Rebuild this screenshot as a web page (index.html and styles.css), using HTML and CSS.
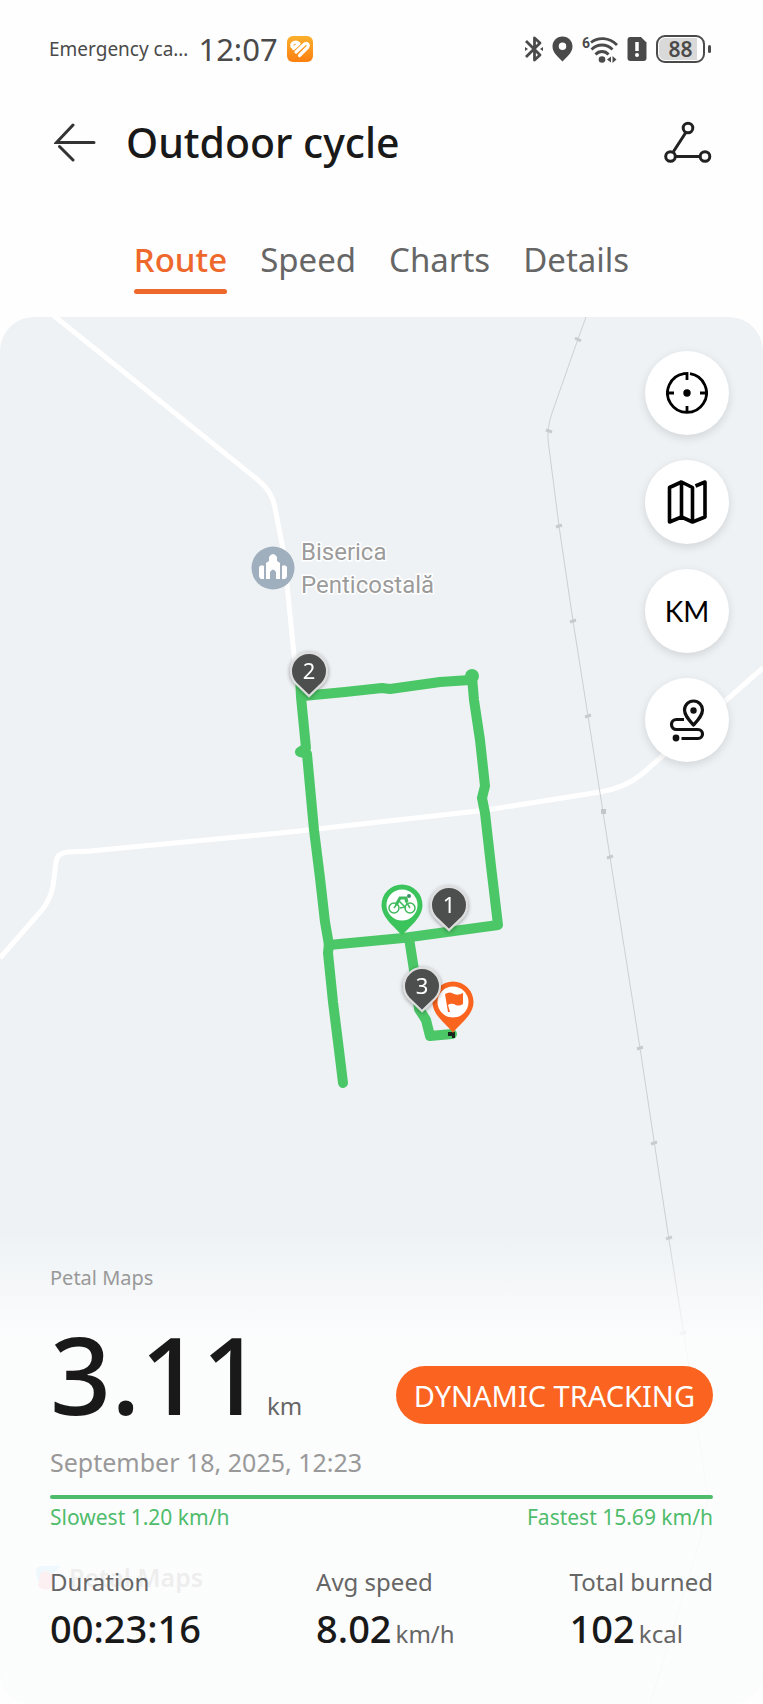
FILE: index.html
```html
<!DOCTYPE html>
<html lang="en">

<head>
    <meta charset="UTF-8">
    <meta name="viewport" content="width=device-width, initial-scale=1.0">
    <title>Outdoor cycle</title>
    <link rel="stylesheet" href="styles.css">
</head>

<body>
    <!-- status bar -->
    <div class="status-bar">
        <span class="carrier">Emergency ca…</span>
        <span class="clock">12:07</span>
        <svg class="app-badge" width="26" height="26" viewBox="0 0 26 26">
            <defs>
                <linearGradient id="badge" x1="0" y1="0" x2="0" y2="1">
                    <stop offset="0" stop-color="#fbb02c" />
                    <stop offset="1" stop-color="#fb7f10" />
                </linearGradient>
            </defs>
            <rect width="26" height="26" rx="6" fill="url(#badge)" />
            <g fill="none" stroke="#fff" stroke-width="3.200" stroke-linecap="round" stroke-linejoin="round">
                <path d="M5 10.500C4 6.500 9 5 12 7.500L6.500 12.500" />
                <path d="M9 16L17 8.500C19.500 6 23 8.500 20.500 11.500L12.500 19.500" />
            </g>
        </svg>

        <div class="status-icons">
            <svg width="18" height="26" viewBox="0 0 18 26" fill="none" stroke="#4a4a4a" stroke-width="2.800" stroke-linejoin="round">
                <path d="M1 5L15 19L9.500 24V2L15 7L1 21" />
                <path d="M0 11L3 13L0 15ZM18 11L15 13L18 15Z" fill="#4a4a4a" stroke="none" />
            </svg>
            <svg width="21" height="26" viewBox="0 0 21 26">
                <path d="M10.500 0.500C4.500 0.500 0.500 5 0.500 10.500C0.500 16.500 6 21 10.500 25.500C15 21 20.500 16.500 20.500 10.500C20.500 5 16.500 0.500 10.500 0.500ZM10.500 6.500A3.700 3.700 0 1 1 10.500 14A3.700 3.700 0 1 1 10.500 6.500Z" fill="#4a4a4a" />
            </svg>
            <svg width="36" height="32" viewBox="0 -3 36 32">
                <text class="wifi-gen" x="0" y="12">6</text>
                <g fill="none" stroke="#4a4a4a" stroke-width="2.800">
                    <path d="M9 6.500C16 1 27 1 35 9" />
                    <path d="M9.500 13.500C15.500 7.500 24.500 7.500 30.500 13.500" />
                    <path d="M13.500 18.500C17 14.500 23 14.500 26.500 18.500" />
                </g>
                <circle cx="20" cy="23.500" r="3.300" fill="#4a4a4a" />
                <path d="M25 23.500L29 20.500V26.500ZM34.500 23.500L30.500 20V27Z" fill="#4a4a4a" />
            </svg>
            <svg width="20" height="26" viewBox="0 0 20 26">
                <path d="M3 1H14L19.500 6.500V22C19.500 24 18.500 25 16.500 25H3.500C1.500 25 0.500 24 0.500 22V4C0.500 2 1.500 1 3 1Z" fill="#4a4a4a" />
                <path d="M10 6V15" stroke="#fff" stroke-width="3.500" />
                <circle cx="10" cy="19" r="2" fill="#fff" />
            </svg>
            <span class="battery"><span class="battery-level">88</span></span>
        </div>
    </div>

    <!-- title -->
    <header class="header">
        <button class="icon-button" aria-label="Back">
            <svg width="42" height="40" viewBox="0 0 42 40" fill="none" stroke="#333" stroke-width="3" stroke-linecap="round">
                <path d="M40 20.500H2.500L19 3" />
                <path d="M5.500 24.500L19 38" />
            </svg>
        </button>
        <h1>Outdoor cycle</h1>
        <button class="icon-button" aria-label="Share route">
            <svg width="48" height="42" viewBox="0 0 48 42" fill="none" stroke="#222" stroke-width="3">
                <path d="M21.500 12L9.500 30.500M12 35.500H36" />
                <circle cx="24" cy="7" r="4.800" />
                <circle cx="6.500" cy="35.500" r="4.800" />
                <circle cx="41" cy="35.500" r="4.800" />
            </svg>
        </button>
    </header>

    <nav class="tabs">
        <a class="tab active" href="#route">Route</a>
        <a class="tab" href="#speed">Speed</a>
        <a class="tab" href="#charts">Charts</a>
        <a class="tab" href="#details">Details</a>
    </nav>

    <main class="map-card" id="route">
        <!-- map, route and pins -->
        <svg class="map" viewBox="0 317 763 1387">
            <defs>
                <filter id="pin-shadow" x="-30%" y="-30%" width="160%" height="160%">
                    <feDropShadow dx="0" dy="1" stdDeviation="2" flood-color="#000" flood-opacity="0.4" />
                </filter>
                <path id="pin" d="M0 25L-13 12.500A18 18 0 1 1 13 12.500Z" />
                <path id="big-pin" d="M0 31C-4 24-20.500 14-20.500 0A20.500 20.500 0 1 1 20.500 0C20.500 14 4 24 0 31Z" />
            </defs>

            <g class="roads">
                <path d="M53 315L258 480Q272 491 275 508L284 554L294 655L301 700" />
                <path d="M0 958L42 910Q51 898 53 886L56 862Q57 853 68 852L90 851L290 832L487 810L600 792Q625 788 642 774L763 668" />
            </g>

            <path class="rail" d="M586 317L578 339L552 413Q547 428 548 440L559 526L573 621L588 716L603 812L610 857L640 1048L669 1240L688 1360L708 1500L700 1540L650 1704" />
            <path class="ties" d="M575 338L581 341M546 430L552 432M556 527L562 525M570 622L576 620M585 717L591 715M607 858L613 856M637 1049L643 1047M651 1144L657 1142M666 1239L672 1237M680 1334L686 1332" />
            <rect x="601" y="809" width="5" height="5" fill="#c4c7c9" />

            <g class="route">
                <path d="M300 676L301 697L306 748L300 752L307 754L314 830L320 878L325 922L329 945L403 938L498 925L491 866L485 813L482 798L485 786L480 740L474 700L472 677L470 680L440 682L390 689L382 688L345 692L303 696" />
                <path d="M329 943L328 953L333 1002L339 1050L343 1083" />
                <path d="M409 938L414 970L419 1009L426 1020L430 1036L452 1034" />
                <circle cx="472" cy="676" r="2" />
            </g>
            <path d="M448 1032H455V1038H452V1036H448Z" fill="#17251a" />

            <!-- church -->
            <circle cx="273" cy="568" r="21.500" fill="#9fafbd" />
            <path d="M266 579V563L269 561V557Q273 551 277 557V561L280 563V579H276V572Q273 567 270 572V579ZM259 567Q261 564 264 566V579H261Q259 578 259 576ZM287 567Q285 564 282 566V579H285Q287 578 287 576Z" fill="#fff" />
            <text class="place" x="301" y="560">Biserica</text>
            <text class="place" x="301" y="593">Penticostală</text>

            <g filter="url(#pin-shadow)">
                <use class="km-pin" href="#pin" x="309" y="671" />
                <use class="km-pin" href="#pin" x="449" y="905" />
            </g>
            <text class="pin-label" x="309" y="679">2</text>
            <text class="pin-label" x="449" y="913">1</text>

            <!-- start -->
            <use href="#big-pin" x="402" y="905" fill="#3cc45c" />
            <circle cx="402" cy="905" r="15.500" fill="#fff" />
            <g fill="none" stroke="#3fba5d" stroke-width="1.500">
                <circle cx="394" cy="908" r="5" />
                <circle cx="410" cy="908" r="5" />
                <path d="M394 908L399 901L405 907L400 908M405 900L410 908" />
                <path d="M396 905L400 898H406L407 902" stroke-width="3" />
            </g>
            <circle cx="409" cy="896" r="2" fill="#3f8f67" />

            <!-- finish -->
            <use href="#big-pin" x="453" y="1002" fill="#fa641e" />
            <circle cx="453" cy="1002" r="15.500" fill="#fff" />
            <path d="M445 994Q450 991 454 994Q458 996 463 993V1004Q458 1007 454 1004Q450 1003 448 1005L450 1012H448Z" fill="#fa641e" />

            <g filter="url(#pin-shadow)">
                <use class="km-pin" href="#pin" x="422" y="986" />
            </g>
            <text class="pin-label" x="422" y="994">3</text>

            <!-- map logo, under the panel -->
            <g opacity="0.6">
                <path d="M36 1572Q36 1566 42 1566H61L50 1576L38 1582Z" fill="#39b8f5" />
                <path d="M40 1574Q46 1568 51 1574Q58 1578 51 1588Q44 1592 38 1586Z" fill="#f5435f" />
            </g>
            <text class="watermark" x="69" y="1587">Petal Maps</text>
        </svg>

        <div class="map-tools">
            <button class="tool" aria-label="Center map">
                <svg width="42" height="42" viewBox="0 0 42 42" fill="none" stroke="#000" stroke-width="2.800">
                    <path d="M24 1.700A19.500 19.500 0 1 1 18 1.700L21 1.500V8M1.500 21H8M40.500 21H34M21 40.500V34" />
                    <circle cx="21" cy="21" r="3.700" fill="#000" stroke="none" />
                </svg>
            </button>
            <button class="tool" aria-label="Map type">
                <svg width="42" height="46" viewBox="0 0 42 46" fill="none" stroke="#000" stroke-width="3.600" stroke-linejoin="round">
                    <path d="M15.500 3L3.500 8.500V43L15.500 38L26.500 43L39 38V3L29.500 7" />
                    <path d="M15.500 38V3L26.500 8.500V43" />
                </svg>
            </button>
            <button class="tool" aria-label="Distance markers">KM</button>
            <button class="tool" aria-label="Route style">
                <svg width="42" height="44" viewBox="0 0 42 44" fill="none" stroke="#111" stroke-width="3.200">
                    <path d="M27.500 27C23 22 18.500 17.500 18.500 12A9 9 0 1 1 36.500 12C36.500 17.500 32 22 27.500 27Z" stroke-linejoin="round" />
                    <path d="M18 21.500H10.500A5 5 0 0 0 10.500 31.500H32A4.500 4.500 0 0 1 32 40.500H15.500" />
                    <circle cx="27.500" cy="12.500" r="3.200" fill="#111" stroke="none" />
                    <circle cx="10" cy="40" r="3.400" fill="#111" stroke="none" />
                </svg>
            </button>
        </div>

        <!-- workout summary -->
        <section class="summary">
            <p class="attribution">Petal Maps</p>
            <div class="distance-row">
                <p class="distance"><strong>3.11</strong> <span class="unit">km</span></p>
                <button class="tracking">DYNAMIC TRACKING</button>
            </div>
            <p class="date">September 18, 2025, 12:23</p>
            <div class="speed-line"></div>
            <div class="speed-range">
                <span>Slowest 1.20 km/h</span>
                <span>Fastest 15.69 km/h</span>
            </div>
            <dl class="stats">
                <div>
                    <dt>Duration</dt>
                    <dd>00:23:16</dd>
                </div>
                <div>
                    <dt>Avg speed</dt>
                    <dd>8.02<span class="unit">km/h</span></dd>
                </div>
                <div>
                    <dt>Total burned</dt>
                    <dd>102<span class="unit">kcal</span></dd>
                </div>
            </dl>
        </section>
    </main>
</body>

</html>
```
FILE: styles.css
```css
* {
    box-sizing: border-box;
}

body {
    margin: 0;
    background: #fefefe;
    color: #191919;
    font-family: "Noto Sans", "Open Sans", sans-serif;
}

h1,
p,
dl,
dd {
    margin: 0;
}

button {
    border: none;
    padding: 0;
    background: none;
    color: inherit;
    font-family: inherit;
    cursor: pointer;
}

svg {
    display: block;
}

/* status bar */
.status-bar {
    display: flex;
    align-items: center;
    height: 98px;
    padding: 0 52px 0 49px;
    color: #4a4a4a;
}

.carrier {
    font-size: 19px;
}

.clock {
    margin-left: 10px;
    font-size: 31px;
}

.app-badge {
    margin-left: 9px;
}

.status-icons {
    display: flex;
    align-items: center;
    gap: 9px;
    margin-left: auto;
}

.wifi-gen {
    fill: #4a4a4a;
    font-family: Roboto, sans-serif;
    font-size: 14px;
    font-weight: 700;
}

.battery {
    position: relative;
    margin-right: 6px;
    padding: 1px;
    border: 2px solid #4a4a4a;
    border-radius: 9px;
}

/* battery tip */
.battery::after {
    content: "";
    position: absolute;
    top: 8px;
    right: -8px;
    width: 3px;
    height: 8px;
    border-radius: 2px;
    background: #4a4a4a;
}

.battery-level {
    display: block;
    width: 43px;
    border-radius: 6px;
    background: linear-gradient(90deg, #d9d9d9 88%, #fefefe 88%);
    font-size: 21px;
    font-weight: 600;
    line-height: 22px;
    text-align: center;
}

/* title */
.header {
    display: flex;
    align-items: center;
    padding: 16px 51px 0 54px;
}

.header h1 {
    flex: 1;
    margin-left: 30px;
    font-size: 41px;
    font-weight: 500;
    line-height: 56px;
}

/* tabs */
.tabs {
    display: flex;
    justify-content: center;
    gap: 33px;
    padding: 68px 0 23px;
}

.tab {
    color: #666;
    font-size: 33px;
    line-height: 44px;
    text-decoration: none;
}

.tab::after {
    content: "";
    display: block;
    height: 5px;
    margin-top: 7px;
    border-radius: 3px;
}

.tab.active {
    color: #ee682c;
    font-weight: 500;
}

.tab.active::after {
    background: #ee682c;
}

/* map */
.map-card {
    display: grid;
    overflow: hidden;
    border-radius: 34px;
    background: #eef2f5;
}

/* the map, its tools and the summary share one cell */
.map-card > * {
    grid-area: 1 / 1;
}

.map {
    width: 100%;
    height: auto;
}

.roads {
    fill: none;
    stroke: #fff;
    stroke-width: 5;
}

.rail {
    fill: none;
    stroke: #cdd0d2;
    stroke-width: 1;
}

.ties {
    stroke: #c8cbcd;
    stroke-width: 3;
}

.route {
    fill: none;
    stroke: #4cc767;
    stroke-width: 10;
    stroke-linecap: round;
    stroke-linejoin: round;
}

.place {
    fill: #9b9b9b;
    stroke: #fff;
    stroke-width: 3px;
    paint-order: stroke;
    font-family: Roboto, sans-serif;
    font-size: 24px;
}

.km-pin {
    fill: #4d4f4f;
    stroke: #dedede;
    stroke-width: 2;
}

.pin-label {
    fill: #fff;
    font-size: 22px;
    text-anchor: middle;
}

.watermark {
    fill: #777;
    font-size: 25px;
    font-weight: 600;
}

.map-tools {
    z-index: 1;
    display: flex;
    flex-direction: column;
    justify-self: end;
    align-self: start;
    gap: 25px;
    padding: 34px 34px 0 0;
}

.tool {
    display: flex;
    align-items: center;
    justify-content: center;
    width: 84px;
    height: 84px;
    border-radius: 50%;
    background: #fff;
    box-shadow: 0 3px 10px rgba(0, 0, 0, 0.12);
    color: #000;
    font-family: Lato, sans-serif;
    font-size: 28px;
}

/* summary */
.summary {
    align-self: end;
    padding: 34px 50px 52px;
    background: linear-gradient(rgba(254, 254, 254, 0), rgba(254, 254, 254, 0.85) 110px, rgba(254, 254, 254, 0.88) 250px);
}

.attribution {
    color: #999;
    font-size: 20px;
    line-height: 28px;
}

.distance-row {
    display: flex;
    align-items: flex-end;
    justify-content: space-between;
    margin-top: 26px;
}

.distance {
    line-height: 1;
}

.distance strong {
    font-size: 107px;
    font-weight: 500;
    line-height: 112px;
}

.unit {
    color: #666;
    font-size: 24px;
    font-weight: 400;
    line-height: 1;
}

.tracking {
    height: 58px;
    margin-bottom: 6px;
    padding: 0 18px;
    border-radius: 29px;
    background: #fa6420;
    color: #fff;
    font-size: 29px;
}

.date {
    margin-top: 16px;
    color: #999;
    font-size: 25px;
    line-height: 32px;
}

.speed-line {
    height: 4px;
    margin-top: 17px;
    border-radius: 2px;
    background: #4fbc6c;
}

.speed-range {
    display: flex;
    justify-content: space-between;
    margin-top: 4px;
    color: #4fbc6c;
    font-size: 21px;
    line-height: 28px;
}

.stats {
    display: flex;
    justify-content: space-between;
    margin-top: 35px;
}

.stats dt {
    color: #666;
    font-size: 24px;
    line-height: 32px;
}

.stats dd {
    margin-top: 6px;
    font-size: 38px;
    font-weight: 500;
    line-height: 48px;
}

.stats .unit {
    margin-left: 4px;
}
```
